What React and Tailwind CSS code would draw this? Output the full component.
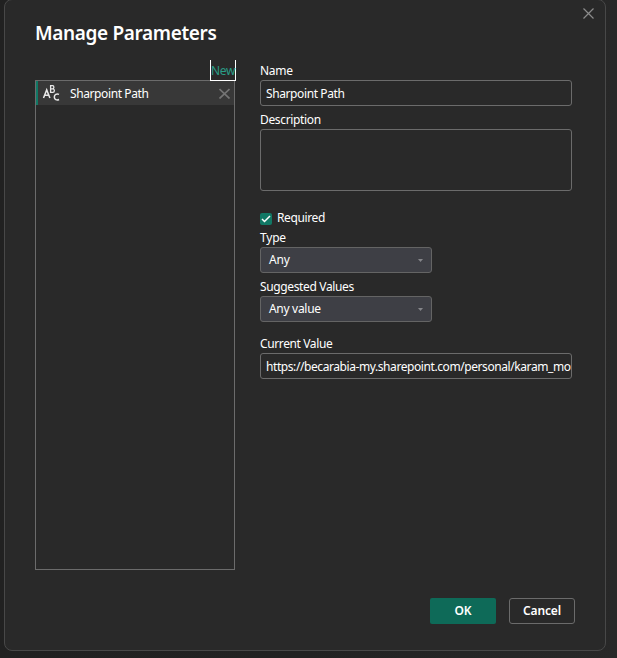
import React from "react";

function Label({ children, className }) {
  return (
    <div className={`h-[18px] whitespace-nowrap leading-[18px] ${className}`}>
      {children}
    </div>
  );
}

function TextField({ children, className }) {
  return (
    <div className="flex h-[26px] w-[312px] items-center overflow-hidden rounded-[3px] border border-[#6b6b6b] pt-[1px] pl-[5px]">
      <span className={`whitespace-nowrap ${className}`}>{children}</span>
    </div>
  );
}

function Select({ children, className }) {
  return (
    <div className="flex h-[26px] w-[172px] items-center justify-between rounded-[3px] border border-[#646464] bg-[#3e3f45] pr-[8px] pl-[8px]">
      <span className={`whitespace-nowrap ${className}`}>{children}</span>
      <svg width="5" height="3" viewBox="0 0 5 3" className="fill-[#85868a]">
        <path d="M0 0h5L2.5 3z" />
      </svg>
    </div>
  );
}

export default function App() {
  return (
    <div className="h-[658px] w-[617px] overflow-hidden bg-gradient-to-r from-[#212121] via-[#222222] to-[#282828] font-['Noto_Sans',sans-serif] text-[12px] text-white">
      <div className="relative -mt-px ml-[4px] h-[652px] w-[602px] rounded-[8px] border border-[#484848] bg-[#292929]">
        <svg
          width="11"
          height="11"
          viewBox="0 0 11 11"
          className="absolute top-[8px] right-[11px] fill-none stroke-[#8b8b8b] stroke-[1.200]"
        >
          <path d="M.5 .5l10 10M10.500 .5l-10 10" />
        </svg>

        <div className="flex h-full flex-col pt-[19px] pl-[30px]">
          <h1 className="h-[28px] text-[19px] leading-[28px] font-semibold tracking-[-0.36px] whitespace-nowrap">
            Manage Parameters
          </h1>

          <div className="mt-[13px] flex h-[510px] gap-[25px]">
            <div className="flex w-[200px] flex-col">
              <div className="z-10 -mr-px -mb-px flex h-[21px] w-[26px] items-center justify-center self-end border-x border-b border-white pt-[2px] text-[#2a9d86]">
                <span className="tracking-[-0.3px]">New</span>
              </div>
              <div className="h-[490px] border border-[#6b6b6b]">
                <div className="flex h-[24px] items-center bg-[#383838]">
                  <div className="h-full w-[2px] bg-[#117865]" />
                  <svg
                    width="18"
                    height="18"
                    viewBox="0 0 18 18"
                    className="ml-[4px] overflow-visible fill-none stroke-[#e8e8e8] stroke-[1.500]"
                  >
                    <path d="M1.500 14L4.700 5.900L7.900 14M2.700 11.300H6.700" />
                    <path d="M8.600 1.700V8.300H10.800C12.900 8.300 12.900 5 10.800 4.900H8.600H10.600C12.300 4.800 12.300 1.700 10.600 1.700Z" className="stroke-[1.300]" />
                    <path d="M17 10.400C14.700 9.200 12.300 10.500 12.300 12.900C12.300 15.400 14.700 16.700 17 15.500" />
                  </svg>
                  <span className="mt-[2px] ml-[10px] tracking-[-0.4px] whitespace-nowrap">
                    Sharpoint Path
                  </span>
                  <svg
                    width="11"
                    height="11"
                    viewBox="0 0 11 11"
                    className="mr-[4px] ml-auto fill-none stroke-[#747474] stroke-[1.700]"
                  >
                    <path d="M.5 1l10 9.500M10.500 1l-10 9.500" />
                  </svg>
                </div>
              </div>
            </div>

            <div className="flex w-[312px] flex-col pt-[2px]">
              <Label className="tracking-[-0.3px]">Name</Label>
              <TextField className="tracking-[-0.4px]">Sharpoint Path</TextField>
              <div className="h-[5px]" />
              <Label className="tracking-[-0.35px]">Description</Label>
              <div className="h-[62px] rounded-[3px] border border-[#6b6b6b]" />
              <div className="mt-[18px] flex h-[18px] items-center gap-[5px]">
                <div className="mt-[2px] flex h-[12px] w-[12px] items-center justify-center rounded-[2px] bg-[#117865]">
                  <svg
                    width="10"
                    height="8"
                    viewBox="0 0 10 8"
                    className="fill-none stroke-white stroke-[1.500]"
                  >
                    <path d="M1 4l2.500 2.500L9 1" />
                  </svg>
                </div>
                <span className="tracking-[-0.38px]">Required</span>
              </div>
              <div className="h-[2px]" />
              <Label className="tracking-[-0.2px]">Type</Label>
              <Select className="tracking-[-0.2px]">Any</Select>
              <div className="h-[5px]" />
              <Label className="tracking-[-0.36px]">Suggested Values</Label>
              <Select className="tracking-[-0.3px]">Any value</Select>
              <div className="h-[13px]" />
              <Label className="tracking-[-0.38px]">Current Value</Label>
              <TextField className="tracking-[-0.42px]">
                https://becarabia-my.sharepoint.com/personal/karam_mo
              </TextField>
            </div>
          </div>

          <div className="mt-[28px] flex gap-[13px] pl-[395px] font-semibold">
            <button className="h-[26px] w-[66px] rounded-[2px] bg-[#0e6a58] tracking-[-0.1px]">
              OK
            </button>
            <button className="h-[26px] w-[66px] rounded-[3px] border border-[#6b6b6b] tracking-[-0.1px]">
              Cancel
            </button>
          </div>
        </div>
      </div>
    </div>
  );
}
